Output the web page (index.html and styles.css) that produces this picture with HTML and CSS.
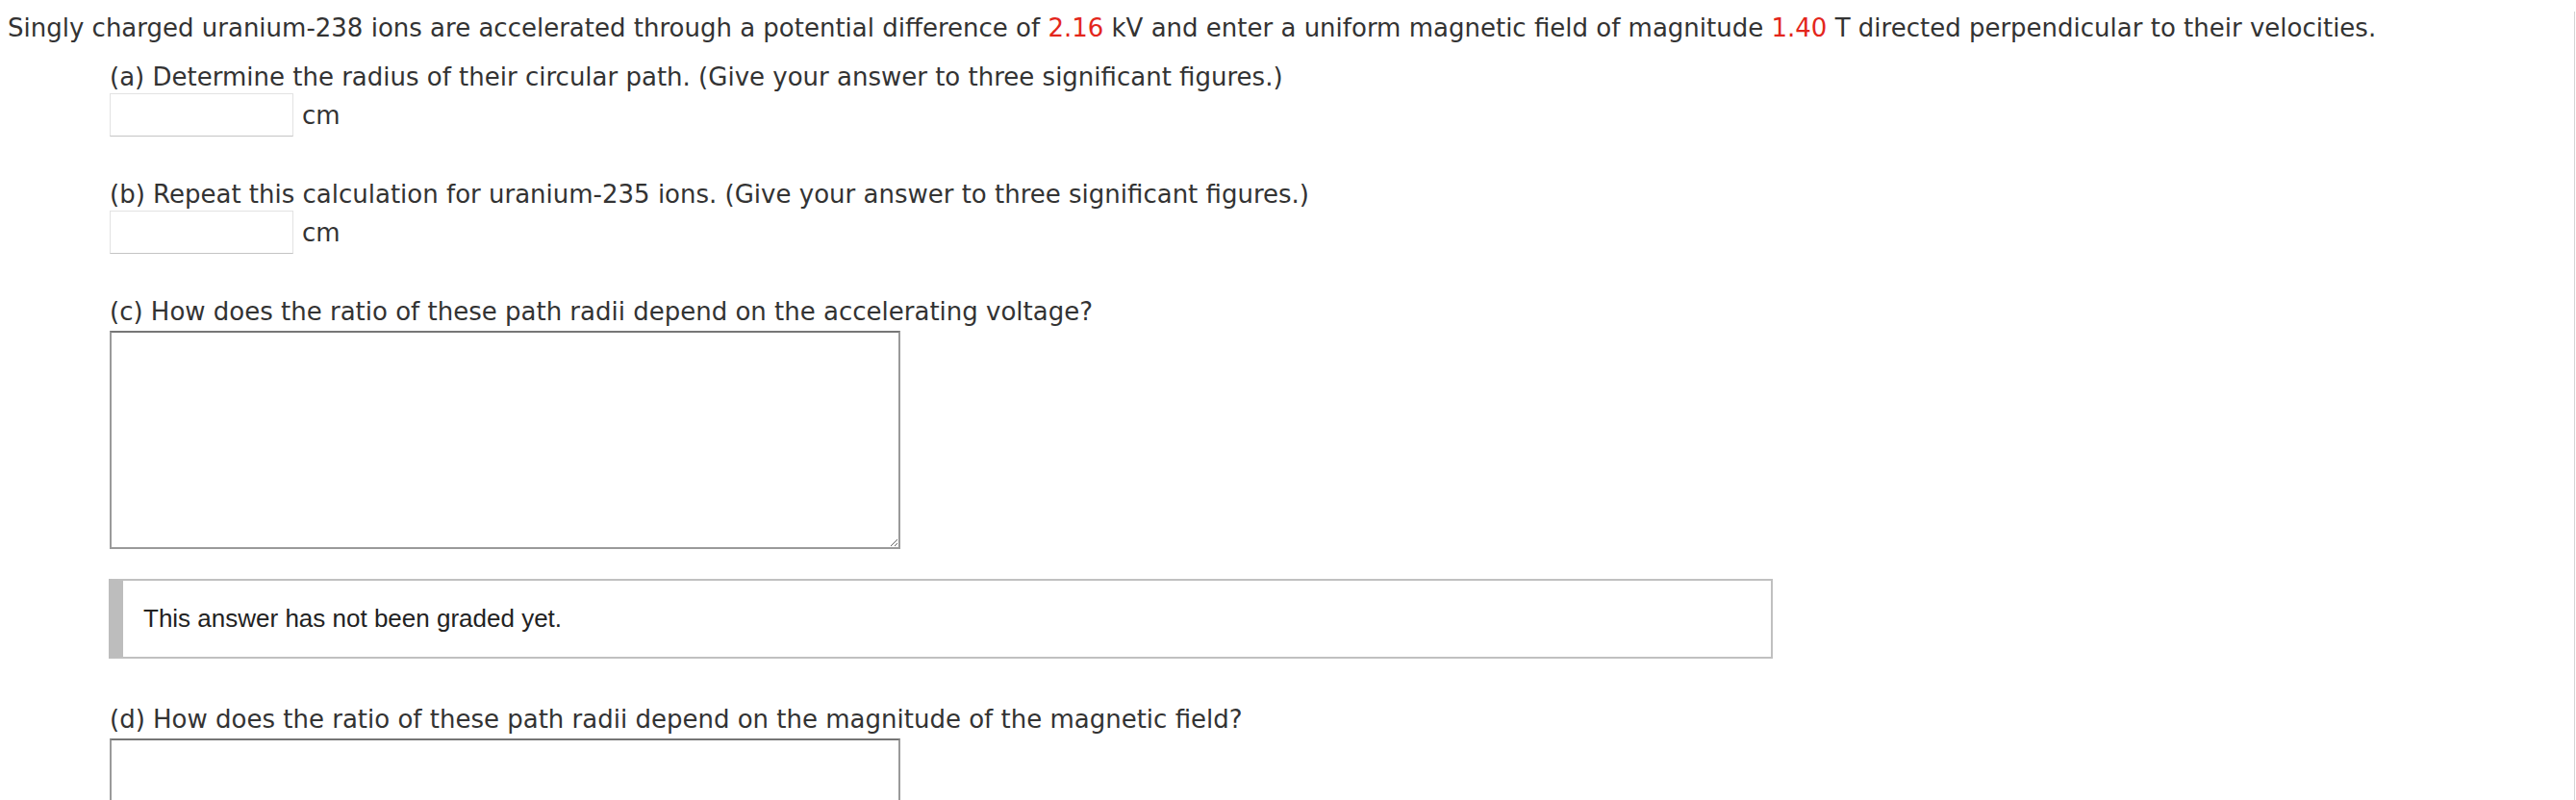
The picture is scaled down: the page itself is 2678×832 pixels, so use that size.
FILE: index.html
```html
<!DOCTYPE html>
<html lang="en">
<head>
<meta charset="utf-8">
<title>Uranium ions in a magnetic field</title>
<link rel="stylesheet" href="styles.css">
</head>
<body>
<div class="page">
  <p class="intro">Singly charged uranium-238 ions are accelerated through a potential difference of <span class="val">2.16</span> kV and enter a uniform magnetic field of magnitude <span class="val">1.40</span> T directed perpendicular to their velocities.</p>

  <div class="part part-a">
    <p class="q">(a) Determine the radius of their circular path. (Give your answer to three significant figures.)</p>
    <div class="answer-row">
      <input class="num" type="text" aria-label="radius for uranium-238">
      <span class="unit">cm</span>
    </div>
  </div>

  <div class="part part-b">
    <p class="q">(b) Repeat this calculation for uranium-235 ions. (Give your answer to three significant figures.)</p>
    <div class="answer-row">
      <input class="num" type="text" aria-label="radius for uranium-235">
      <span class="unit">cm</span>
    </div>
  </div>

  <div class="part part-c">
    <p class="q">(c) How does the ratio of these path radii depend on the accelerating voltage?</p>
    <textarea class="essay" aria-label="answer c"></textarea>
    <div class="grade">This answer has not been graded yet.</div>
  </div>

  <div class="part part-d">
    <p class="q">(d) How does the ratio of these path radii depend on the magnitude of the magnetic field?</p>
    <textarea class="essay" aria-label="answer d"></textarea>
  </div>
</div>
</body>
</html>
```

FILE: styles.css
```css
html, body {
  margin: 0;
  padding: 0;
  background: #ffffff;
  overflow: hidden;
}

.page {
  width: 2676px;
  height: 832px;
  border-right: 1px solid #d4d4d4;
  font-family: "DejaVu Sans", Verdana, sans-serif;
  font-size: 26px;
  color: #333333;
}

.intro {
  margin: 12px 0 0 8px;
  line-height: 34px;
  white-space: nowrap;
}

.val {
  color: #e3261c;
}

.part {
  padding-left: 114px;
}

.q {
  margin: 0;
  line-height: 34px;
  white-space: nowrap;
}

.part-a { margin-top: 17px; }
.part-b { margin-top: 43px; }
.part-c { margin-top: 43px; }
.part-d { margin-top: 46px; }

.answer-row {
  display: flex;
  align-items: center;
  gap: 9px;
}

.num {
  box-sizing: border-box;
  width: 191px;
  height: 45px;
  margin: 0;
  border: 1px solid #e2e2e2;
  border-bottom-color: #c4c4c4;
  background: #ffffff;
}

.unit {
  line-height: 34px;
}

.essay {
  display: block;
  box-sizing: border-box;
  width: 822px;
  height: 227px;
  margin: 3px 0 0 0;
  border: 2px solid #9a9a9a;
  border-top-color: #767676;
  background: #ffffff;
  resize: both;
}

.part-d .essay {
  margin-top: 3px;
}

.grade {
  box-sizing: border-box;
  width: 1730px;
  height: 83px;
  margin-top: 31px;
  margin-left: -1px;
  padding-left: 21px;
  display: flex;
  align-items: center;
  border: 2px solid #c0c0c0;
  border-left: 15px solid #bdbdbd;
  font-family: "Liberation Sans", Arial, sans-serif;
  font-size: 26px;
  color: #222222;
}
```
